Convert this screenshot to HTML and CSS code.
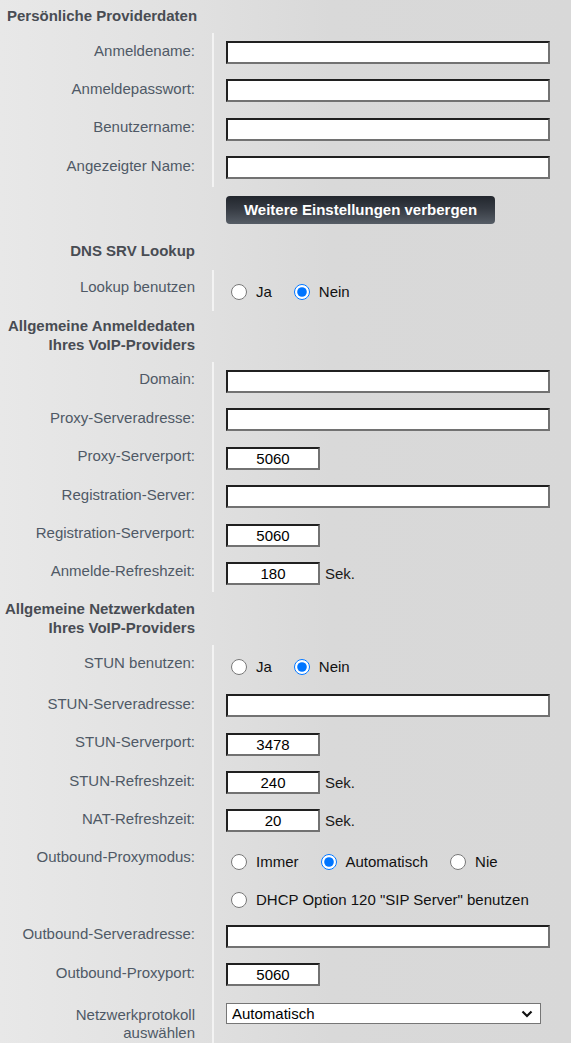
FILE: index.html
```html
<!DOCTYPE html>
<html lang="de">
<head>
<meta charset="utf-8">
<title>Providerdaten</title>
<link rel="stylesheet" href="styles.css">
</head>
<body>
<div class="page">
  <div class="head head-left">Persönliche Providerdaten</div>
  <div class="group">
    <div class="row"><div class="lbl">Anmeldename:</div><div class="val"><input class="txt wide" type="text"></div></div>
    <div class="row"><div class="lbl">Anmeldepasswort:</div><div class="val"><input class="txt wide" type="password"></div></div>
    <div class="row"><div class="lbl">Benutzername:</div><div class="val"><input class="txt wide" type="text"></div></div>
    <div class="row"><div class="lbl">Angezeigter Name:</div><div class="val"><input class="txt wide" type="text"></div></div>
  </div>
  <div class="btn-row"><button class="btn" type="button">Weitere Einstellungen verbergen</button></div>

  <div class="head head-dns">DNS SRV Lookup</div>
  <div class="group">
    <div class="row"><div class="lbl">Lookup benutzen</div>
      <div class="val radio-val">
        <label class="opt"><input type="radio" name="dns"><span>Ja</span></label><label class="opt"><input type="radio" name="dns" checked><span>Nein</span></label>
      </div>
    </div>
  </div>

  <div class="head head-two head-anm">Allgemeine Anmeldedaten<br>Ihres VoIP-Providers</div>
  <div class="group">
    <div class="row"><div class="lbl">Domain:</div><div class="val"><input class="txt wide" type="text"></div></div>
    <div class="row"><div class="lbl">Proxy-Serveradresse:</div><div class="val"><input class="txt wide" type="text"></div></div>
    <div class="row"><div class="lbl">Proxy-Serverport:</div><div class="val"><input class="txt small" type="text" value="5060"></div></div>
    <div class="row"><div class="lbl">Registration-Server:</div><div class="val"><input class="txt wide" type="text"></div></div>
    <div class="row"><div class="lbl">Registration-Serverport:</div><div class="val"><input class="txt small" type="text" value="5060"></div></div>
    <div class="row"><div class="lbl">Anmelde-Refreshzeit:</div><div class="val"><input class="txt small" type="text" value="180"><span class="unit">Sek.</span></div></div>
  </div>

  <div class="head head-two head-net">Allgemeine Netzwerkdaten<br>Ihres VoIP-Providers</div>
  <div class="group">
    <div class="row"><div class="lbl">STUN benutzen:</div>
      <div class="val radio-val">
        <label class="opt"><input type="radio" name="stun"><span>Ja</span></label><label class="opt"><input type="radio" name="stun" checked><span>Nein</span></label>
      </div>
    </div>
    <div class="row"><div class="lbl">STUN-Serveradresse:</div><div class="val"><input class="txt wide" type="text"></div></div>
    <div class="row"><div class="lbl">STUN-Serverport:</div><div class="val"><input class="txt small" type="text" value="3478"></div></div>
    <div class="row"><div class="lbl">STUN-Refreshzeit:</div><div class="val"><input class="txt small" type="text" value="240"><span class="unit">Sek.</span></div></div>
    <div class="row"><div class="lbl">NAT-Refreshzeit:</div><div class="val"><input class="txt small" type="text" value="20"><span class="unit">Sek.</span></div></div>
    <div class="row"><div class="lbl">Outbound-Proxymodus:</div>
      <div class="val radio-val outbound">
        <div class="radio-line">
          <label class="opt"><input type="radio" name="ob"><span>Immer</span></label><label class="opt"><input type="radio" name="ob" checked><span>Automatisch</span></label><label class="opt"><input type="radio" name="ob"><span>Nie</span></label>
        </div>
        <div class="radio-line dhcp">
          <label class="opt"><input type="radio" name="ob"><span>DHCP Option 120 "SIP Server" benutzen</span></label>
        </div>
      </div>
    </div>
    <div class="row"><div class="lbl">Outbound-Serveradresse:</div><div class="val"><input class="txt wide" type="text"></div></div>
    <div class="row"><div class="lbl">Outbound-Proxyport:</div><div class="val"><input class="txt small" type="text" value="5060"></div></div>
    <div class="row row-last"><div class="lbl lbl-two">Netzwerkprotokoll<br>auswählen</div>
      <div class="val sel-val">
        <div class="sel-wrap">
          <select class="sel"><option>Automatisch</option><option>UDP</option><option>TCP</option></select>
          <svg class="chev" width="12" height="8" viewBox="0 0 12 8"><path d="M1.5 1.5 L6 6 L10.5 1.5" fill="none" stroke="#111" stroke-width="2.2"/></svg>
        </div>
      </div>
    </div>
  </div>
</div>
</body>
</html>
```
FILE: styles.css
```css
html, body {
  margin: 0;
  padding: 0;
}
body {
  background: linear-gradient(90deg, #e8e8e8 0px, #e0e0e0 200px, #d9d9d9 330px, #d8d8d8 100%);
  font-family: "Liberation Sans", Arial, sans-serif;
  font-size: 15px;
  color: #4d5663;
  min-height: 1043px;
}
.page {
  width: 571px;
}
.head {
  font-weight: bold;
  color: #484c53;
  line-height: 17px;
  width: 195px;
  text-align: right;
}
.head-left {
  text-align: left;
  padding: 7px 0 0 7px;
  width: auto;
  margin-bottom: 9px;
}
.head-dns {
  margin-top: 18px;
  margin-bottom: 11px;
}
.head-two {
  line-height: 19px;
}
.head-anm {
  margin-top: 5px;
  margin-bottom: 8px;
}
.head-net {
  margin-top: 7px;
  margin-bottom: 8px;
}
.row {
  display: flex;
}
.lbl {
  width: 195px;
  flex: none;
  text-align: right;
  padding-top: 8.5px;
  line-height: 17px;
  color: #4f5966;
}
.lbl-two {
  line-height: 18px;
  padding-top: 12px;
}
.val {
  margin-left: 17px;
  border-left: 2px solid #f3f3f3;
  padding: 8px 0 7.4px 12px;
  flex: 1;
  display: flex;
  align-items: center;
  color: #1a1a1a;
  line-height: 17px;
}
.txt {
  box-sizing: border-box;
  height: 23px;
  border: 2px solid;
  border-color: #202020 #727272 #727272 #202020;
  background: #fff;
  font-family: "Liberation Sans", Arial, sans-serif;
  font-size: 15px;
  color: #000;
  padding: 0 4px;
  margin: 0;
  outline: none;
  display: block;
}
.wide {
  width: 324px;
}
.small {
  width: 94px;
  text-align: center;
}
.unit {
  margin-left: 5px;
  color: #1a1a1a;
}
.btn-row {
  padding-left: 226px;
  margin-top: 9.4px;
  display: flex;
}
.btn {
  box-sizing: border-box;
  width: 269px;
  height: 28px;
  border: none;
  border-radius: 4px;
  background: linear-gradient(180deg, #22262d 0%, #353a42 45%, #565d66 100%);
  color: #fff;
  font-family: "Liberation Sans", Arial, sans-serif;
  font-weight: bold;
  font-size: 15px;
  padding: 0 0 1px;
  margin: 0;
}
.radio-val {
  display: block;
  padding: 13px 0 11px 12px;
  line-height: 17px;
}
.opt {
  display: inline;
  margin-right: 17px;
  color: #111;
  white-space: nowrap;
}
.opt input {
  width: 16px;
  height: 16px;
  margin: 0 9px 0 5px;
  vertical-align: -3px;
  accent-color: #0075ff;
}
.outbound {
  padding-bottom: 9px;
}
.dhcp {
  margin-top: 21px;
}
.sel-val {
  padding-top: 9px;
  padding-bottom: 20px;
  align-items: flex-start;
}
.sel-wrap {
  position: relative;
  width: 315px;
  height: 21px;
}
.sel {
  appearance: none;
  -webkit-appearance: none;
  box-sizing: border-box;
  width: 315px;
  height: 21px;
  border: 1px solid #767676;
  border-radius: 0;
  background: #fff;
  font-family: "Liberation Sans", Arial, sans-serif;
  font-size: 15px;
  color: #000;
  padding: 0 24px 0 5px;
  margin: 0;
  display: block;
}
.chev {
  position: absolute;
  right: 8px;
  top: 7px;
  pointer-events: none;
}
```
